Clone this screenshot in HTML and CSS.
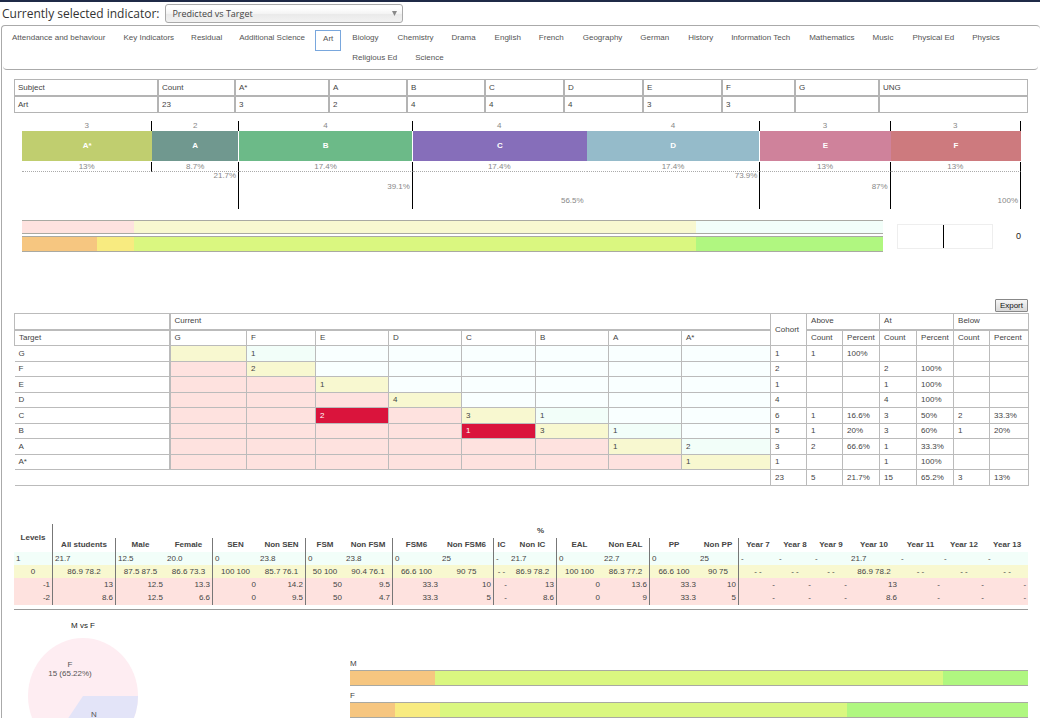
FILE: index.html
```html
<!DOCTYPE html>
<html lang="en">
<head>
<meta charset="utf-8">
<title>Predicted vs Target</title>
<link rel="stylesheet" href="styles.css">
</head>
<body>
<header class="top">
  <label class="top-label" for="indicator">Currently selected indicator:</label>
  <span class="select-wrap">
    <select id="indicator" class="select"><option>Predicted vs Target</option></select>
    <svg class="select-arrow" viewBox="0 0 5 5" aria-hidden="true"><path d="M0 0h5L2.5 5z"/></svg>
  </span>
</header>
<main class="panel">
  <nav class="tabs">
    <a class="tab" href="#">Attendance and behaviour</a>
    <a class="tab tab-tight" href="#">Key Indicators</a>
    <a class="tab tab-tight" href="#">Residual</a>
    <a class="tab" href="#">Additional Science</a>
    <a class="tab tab-active" href="#">Art</a>
    <a class="tab" href="#">Biology</a>
    <a class="tab" href="#">Chemistry</a>
    <a class="tab" href="#">Drama</a>
    <a class="tab" href="#">English</a>
    <a class="tab" href="#">French</a>
    <a class="tab" href="#">Geography</a>
    <a class="tab" href="#">German</a>
    <a class="tab" href="#">History</a>
    <a class="tab" href="#">Information Tech</a>
    <a class="tab" href="#">Mathematics</a>
    <a class="tab" href="#">Music</a>
    <a class="tab" href="#">Physical Ed</a>
    <a class="tab" href="#">Physics</a>
    <a class="tab" href="#">Religious Ed</a>
    <a class="tab" href="#">Science</a>
  </nav>
  <div class="content">
    <table class="summary">
      <thead><tr><th>Subject</th><th>Count</th><th>A*</th><th>A</th><th>B</th><th>C</th><th>D</th><th>E</th><th>F</th><th>G</th><th>UNG</th></tr></thead>
      <tbody><tr><td>Art</td><td>23</td><td>3</td><td>2</td><td>4</td><td>4</td><td>4</td><td>3</td><td>3</td><td></td><td></td></tr></tbody>
    </table>

    <section class="grades">
      <div class="grade g-astar tick-short"><span class="g-count">3</span><b class="g-bar">A*</b><span class="g-pct">13%</span><span class="g-cum"></span></div>
      <div class="grade g-a tick split"><span class="g-count">2</span><b class="g-bar">A</b><span class="g-pct">8.7%</span><span class="g-cum">21.7%</span></div>
      <div class="grade g-b tick split"><span class="g-count">4</span><b class="g-bar">B</b><span class="g-pct">17.4%</span><span class="g-cum cum-mid">39.1%</span></div>
      <div class="grade g-c"><span class="g-count">4</span><b class="g-bar">C</b><span class="g-pct">17.4%</span><span class="g-cum cum-low">56.5%</span></div>
      <div class="grade g-d tick split"><span class="g-count">4</span><b class="g-bar">D</b><span class="g-pct">17.4%</span><span class="g-cum">73.9%</span></div>
      <div class="grade g-e tick"><span class="g-count">3</span><b class="g-bar">E</b><span class="g-pct">13%</span><span class="g-cum cum-mid">87%</span></div>
      <div class="grade g-f tick"><span class="g-count">3</span><b class="g-bar">F</b><span class="g-pct">13%</span><span class="g-cum cum-low">100%</span></div>
    </section>

    <section class="progress">
      <div class="progress-bars">
        <div class="bar bar-slim"><i class="pink" style="width:13.04%"></i><i class="cream" style="width:65.22%"></i><i class="mint" style="width:21.74%"></i></div>
        <div class="bar"><i class="orange" style="width:8.7%"></i><i class="yellow" style="width:4.35%"></i><i class="lime" style="width:65.21%"></i><i class="green" style="width:21.74%"></i></div>
      </div>
      <div class="gauge"><div class="gauge-half"></div></div>
      <div class="gauge-value">0</div>
    </section>

    <div class="actions"><button class="export" type="button">Export</button></div>

    <table class="matrix">
      <colgroup><col class="w155"><col class="w77"><col class="w69"><col class="w73"><col class="w73"><col class="w74"><col class="w73"><col class="w73"><col class="w89"><col class="w36"><col class="w36"><col class="w37"><col class="w37"><col class="w37"><col class="w36"><col class="w39"></colgroup>
      <thead>
        <tr><th></th><th colspan="8">Current</th><th rowspan="2" class="cohort">Cohort</th><th colspan="2">Above</th><th colspan="2">At</th><th colspan="2">Below</th></tr>
        <tr><th>Target</th><th>G</th><th>F</th><th>E</th><th>D</th><th>C</th><th>B</th><th>A</th><th>A*</th><th>Count</th><th>Percent</th><th>Count</th><th>Percent</th><th>Count</th><th>Percent</th></tr>
      </thead>
      <tbody>
        <tr><th>G</th><td class="cream"></td><td class="mint">1</td><td class="ice"></td><td class="ice"></td><td class="ice"></td><td class="ice"></td><td class="ice"></td><td class="ice"></td><td>1</td><td>1</td><td>100%</td><td></td><td></td><td></td><td></td></tr>
        <tr><th>F</th><td class="pink"></td><td class="cream">2</td><td class="ice"></td><td class="ice"></td><td class="ice"></td><td class="ice"></td><td class="ice"></td><td class="ice"></td><td>2</td><td></td><td></td><td>2</td><td>100%</td><td></td><td></td></tr>
        <tr><th>E</th><td class="pink"></td><td class="pink"></td><td class="cream">1</td><td class="ice"></td><td class="ice"></td><td class="ice"></td><td class="ice"></td><td class="ice"></td><td>1</td><td></td><td></td><td>1</td><td>100%</td><td></td><td></td></tr>
        <tr><th>D</th><td class="pink"></td><td class="pink"></td><td class="pink"></td><td class="cream">4</td><td class="ice"></td><td class="ice"></td><td class="ice"></td><td class="ice"></td><td>4</td><td></td><td></td><td>4</td><td>100%</td><td></td><td></td></tr>
        <tr><th>C</th><td class="pink"></td><td class="pink"></td><td class="red">2</td><td class="pink"></td><td class="cream">3</td><td class="mint">1</td><td class="ice"></td><td class="ice"></td><td>6</td><td>1</td><td>16.6%</td><td>3</td><td>50%</td><td>2</td><td>33.3%</td></tr>
        <tr><th>B</th><td class="pink"></td><td class="pink"></td><td class="pink"></td><td class="pink"></td><td class="red">1</td><td class="cream">3</td><td class="mint">1</td><td class="ice"></td><td>5</td><td>1</td><td>20%</td><td>3</td><td>60%</td><td>1</td><td>20%</td></tr>
        <tr><th>A</th><td class="pink"></td><td class="pink"></td><td class="pink"></td><td class="pink"></td><td class="pink"></td><td class="pink"></td><td class="cream">1</td><td class="mint">2</td><td>3</td><td>2</td><td>66.6%</td><td>1</td><td>33.3%</td><td></td><td></td></tr>
        <tr><th>A*</th><td class="pink"></td><td class="pink"></td><td class="pink"></td><td class="pink"></td><td class="pink"></td><td class="pink"></td><td class="pink"></td><td class="cream">1</td><td>1</td><td></td><td></td><td>1</td><td>100%</td><td></td><td></td></tr>
        <tr class="total"><td colspan="9"></td><td>23</td><td>5</td><td>21.7%</td><td>15</td><td>65.2%</td><td>3</td><td>13%</td></tr>
      </tbody>
    </table>

    <div class="levels-wrap">
    <table class="levels">
      <colgroup><col class="w39"><col class="w63"><col class="w49"><col class="w48"><col class="w45"><col class="w48"><col class="w38"><col class="w49"><col class="w47"><col class="w54"><col class="w15"><col class="w48"><col class="w45"><col class="w48"><col class="w48"><col class="w41"><col class="w38"><col class="w36"><col class="w36"><col class="w50"><col class="w43"><col class="w44"><col class="w42"></colgroup>
      <thead>
        <tr><th rowspan="2" class="rule">Levels</th><th colspan="22" class="unit">%</th></tr>
        <tr><th class="rule">All students</th><th>Male</th><th class="rule">Female</th><th>SEN</th><th class="rule">Non SEN</th><th>FSM</th><th class="rule">Non FSM</th><th>FSM6</th><th class="rule">Non FSM6</th><th>IC</th><th class="rule">Non IC</th><th>EAL</th><th class="rule">Non EAL</th><th>PP</th><th class="rule">Non PP</th><th>Year 7</th><th>Year 8</th><th>Year 9</th><th>Year 10</th><th>Year 11</th><th>Year 12</th><th>Year 13</th></tr>
      </thead>
      <tbody>
        <tr class="mint left"><td class="rule">1</td><td class="rule">21.7</td><td>12.5</td><td class="rule">20.0</td><td>0</td><td class="rule">23.8</td><td>0</td><td class="rule">23.8</td><td>0</td><td class="rule">25</td><td>-</td><td class="rule">21.7</td><td>0</td><td class="rule">22.7</td><td>0</td><td class="rule">25</td><td>-</td><td>-</td><td>-</td><td>21.7</td><td>-</td><td>-</td><td>-</td></tr>
        <tr class="cream center"><td class="rule">0</td><td class="rule">86.9 78.2</td><td>87.5 87.5</td><td class="rule">86.6 73.3</td><td>100 100</td><td class="rule">85.7 76.1</td><td>50 100</td><td class="rule">90.4 76.1</td><td>66.6 100</td><td class="rule">90 75</td><td>- -</td><td class="rule">86.9 78.2</td><td>100 100</td><td class="rule">86.3 77.2</td><td>66.6 100</td><td class="rule">90 75</td><td>- -</td><td>- -</td><td>- -</td><td>86.9 78.2</td><td>- -</td><td>- -</td><td>- -</td></tr>
        <tr class="pink right"><td class="rule">-1</td><td class="rule">13</td><td>12.5</td><td class="rule">13.3</td><td>0</td><td class="rule">14.2</td><td>50</td><td class="rule">9.5</td><td>33.3</td><td class="rule">10</td><td>-</td><td class="rule">13</td><td>0</td><td class="rule">13.6</td><td>33.3</td><td class="rule">10</td><td>-</td><td>-</td><td>-</td><td>13</td><td>-</td><td>-</td><td>-</td></tr>
        <tr class="pink right"><td class="rule">-2</td><td class="rule">8.6</td><td>12.5</td><td class="rule">6.6</td><td>0</td><td class="rule">9.5</td><td>50</td><td class="rule">4.7</td><td>33.3</td><td class="rule">5</td><td>-</td><td class="rule">8.6</td><td>0</td><td class="rule">9</td><td>33.3</td><td class="rule">5</td><td>-</td><td>-</td><td>-</td><td>8.6</td><td>-</td><td>-</td><td>-</td></tr>
      </tbody>
    </table>
    </div>

    <section class="split-charts">
      <figure class="pie">
        <figcaption>M vs F</figcaption>
        <svg class="pie-svg" viewBox="0 0 110 116">
          <ellipse cx="55" cy="58" rx="55" ry="58" fill="#feedf2"/>
          <path d="M55 58H110A55 58 0 0 1 23.3 105.4Z" fill="#e3e4f8"/>
          <text x="42" y="29">F</text>
          <text x="42" y="38">15 (65.22%)</text>
          <text x="66" y="79">N</text>
        </svg>
      </figure>
      <div class="sex-bars">
        <div class="bar-label">M</div>
        <div class="bar"><i class="orange" style="width:12.5%"></i><i class="lime" style="width:75%"></i><i class="green" style="width:12.5%"></i></div>
        <div class="bar-label">F</div>
        <div class="bar"><i class="orange" style="width:6.67%"></i><i class="yellow" style="width:6.67%"></i><i class="lime" style="width:60%"></i><i class="green" style="width:26.66%"></i></div>
      </div>
    </section>
  </div>
</main>
</body>
</html>
```
FILE: styles.css
```css
* { box-sizing: border-box; }
body {
  margin: 0;
  border-top: 2px solid #1f2a47;
  background: #fff;
  color: #444;
  font: 8px/10px "Liberation Sans", Arial, sans-serif;
}
.top {
  display: flex;
  align-items: center;
  gap: 6px;
  height: 23px;
  padding-left: 2px;
}
.top-label {
  color: #333;
  font: 12px/20px "Open Sans", "Noto Sans", sans-serif;
}
.select-wrap { position: relative; width: 238px; height: 19px; }
.select {
  display: block;
  width: 100%;
  height: 19px;
  padding: 0 6px;
  appearance: none;
  border: 1px solid #aaa;
  border-radius: 3px;
  background: linear-gradient(#fff 20%, #f4f4f4 50%, #eaeaea 55%, #f2f2f2);
  color: #444;
  font: 9px/16px "Open Sans", "Noto Sans", sans-serif;
}
.select-arrow { position: absolute; right: 6px; top: 7px; width: 5px; height: 5px; fill: #888; }

.panel {
  margin-left: 1px;
  border: 1px solid #aaa;
  border-right: 0;
  border-radius: 4px 4px 0 0;
}
.tabs {
  display: flow-root;
  margin: 0 2px 0 1px;
  padding-top: 4px;
  height: 44px;
  border-bottom: 1px solid #aaa;
  border-radius: 0 0 4px 4px;
}
.tab {
  float: left;
  height: 20px;
  margin: 0 1px;
  padding: 2px 7px;
  border: 1px solid transparent;
  color: #555;
  text-decoration: none;
}
.tab-tight { margin-right: 0; }
.tab-active { height: 21px; margin-right: 2px; padding-top: 3px; border-color: #79a7dd; }
.tab-active ~ .tab:nth-child(even) { margin-right: 2px; }
.content { padding: 9px 12px 0; }

table { width: 100%; table-layout: fixed; border-spacing: 0; }
th, td { padding: 0; font-weight: 400; text-align: left; white-space: nowrap; }

.summary th, .summary td { height: 17px; padding-left: 3px; border: 1px solid #b4b4b4; }
.summary th:nth-child(1) { width: 144px; }
.summary th:nth-child(2) { width: 77px; }
.summary th:nth-child(3) { width: 94px; }
.summary th:nth-child(4), .summary th:nth-child(5) { width: 78px; }
.summary th:nth-child(6), .summary th:nth-child(7), .summary th:nth-child(8) { width: 79px; }
.summary th:nth-child(9) { width: 73px; }
.summary th:nth-child(10) { width: 84px; }
.summary th:nth-child(11) { width: 149px; }

.grades {
  display: grid;
  grid-template-columns: 3fr 2fr 4fr 4fr 4fr 3fr 3fr;
  margin: 8px 7px 0 8px;
  color: #888;
  text-align: center;
}
.grade { display: flex; flex-direction: column; }
.g-count, .g-pct, .g-cum { border-right: 1px solid transparent; }
.g-count { height: 10px; }
.g-bar { height: 30px; margin-bottom: 1px; color: #fff; line-height: 30px; }
.g-pct { height: 10px; border-bottom: 1px dotted #aaa; }
.g-cum { height: 37px; padding-right: 2px; line-height: 8px; text-align: right; }
.cum-mid { padding-top: 11px; }
.cum-low { padding-top: 25px; }
.tick .g-count, .tick .g-pct, .tick .g-cum,
.tick-short .g-count, .tick-short .g-pct { border-right-color: #000; }
.split .g-bar { border-right: 1px solid #fff; }
.g-astar .g-bar { background: #c0ce6f; }
.g-a .g-bar { background: #70988f; }
.g-b .g-bar { background: #6cba88; }
.g-c .g-bar { background: #866eba; }
.g-d .g-bar { background: #95bbca; }
.g-e .g-bar { background: #cf829b; }
.g-f .g-bar { background: #cd7a7e; }

.progress { display: flex; align-items: center; margin: 11px 7px 0 8px; }
.progress-bars { flex: 1; display: grid; gap: 2px; }
.bar { display: flex; height: 16px; border: solid #a9a9a2; border-width: 1px 0; }
.bar-slim { height: 14px; }
.pink { background: #fee2df; }
.cream { background: #f8f8d0; }
.mint { background: #f2fef9; }
.ice { background: #f9ffff; }
.orange { background: #f6c680; }
.yellow { background: #f8eb80; }
.lime { background: #daf780; }
.green { background: #b0f780; }
.gauge { width: 96px; height: 25px; margin-left: 14px; border: 1px solid #eee; }
.gauge-half { width: 49%; height: 100%; border-right: 1px solid #000; }
.gauge-value { width: 28px; color: #222; font-size: 9px; text-align: right; }

.actions { display: flex; justify-content: flex-end; margin-top: 47px; }
.export {
  height: 13px;
  padding: 0 4px;
  border: 1px solid #888;
  border-radius: 1px;
  background: linear-gradient(#f6f6f6, #d8d8d8);
  color: #111;
  font: 8px/10px "Liberation Sans", Arial, sans-serif;
}

.matrix { margin-top: 1px; border-collapse: collapse; }
.matrix th, .matrix td { height: 15px; padding-left: 4px; border: 1px solid #bbb; }
.matrix thead th { height: 16px; }
.matrix thead tr:first-child th:not(.cohort) { border-bottom-width: 2px; }
.matrix th:first-child { border-right-width: 2px; }
.matrix tbody tr:nth-child(odd) > * { height: 16px; }
.matrix tbody tr > :first-child { border-left: 0; }
.matrix .red { background: #da143c; color: #fff; }

.levels-wrap { margin-top: 38px; padding-bottom: 4px; border-bottom: 1px solid #999; }
.levels th { height: 14px; font-weight: 700; text-align: center; }
.levels td { height: 13px; padding: 0 2px; }
.levels tr:last-child td { height: 14px; }
.levels .rule { border-right: 1px solid #777; }
.levels .center td { padding: 0; text-align: center; }
.levels .right td { text-align: right; }

.w15 { width: 15px; }
.w36 { width: 36px; }
.w37 { width: 37px; }
.w38 { width: 38px; }
.w39 { width: 39px; }
.w41 { width: 41px; }
.w42 { width: 42px; }
.w43 { width: 43px; }
.w44 { width: 44px; }
.w45 { width: 45px; }
.w47 { width: 47px; }
.w48 { width: 48px; }
.w49 { width: 49px; }
.w50 { width: 50px; }
.w54 { width: 54px; }
.w63 { width: 63px; }
.w69 { width: 69px; }
.w73 { width: 73px; }
.w74 { width: 74px; }
.w77 { width: 77px; }
.w89 { width: 89px; }
.w155 { width: 155px; }

.split-charts { display: grid; grid-template-columns: 336px 1fr; }
.pie { width: 110px; margin: 11px 0 0 14px; text-align: center; }
.pie figcaption { margin-bottom: 7px; color: #222; }
.pie-svg { display: block; width: 110px; height: 116px; }
.pie-svg text { fill: #555; text-anchor: middle; }
.sex-bars { padding-top: 49px; }
.bar-label { height: 11px; }
.sex-bars .bar { margin-bottom: 5px; }
```
